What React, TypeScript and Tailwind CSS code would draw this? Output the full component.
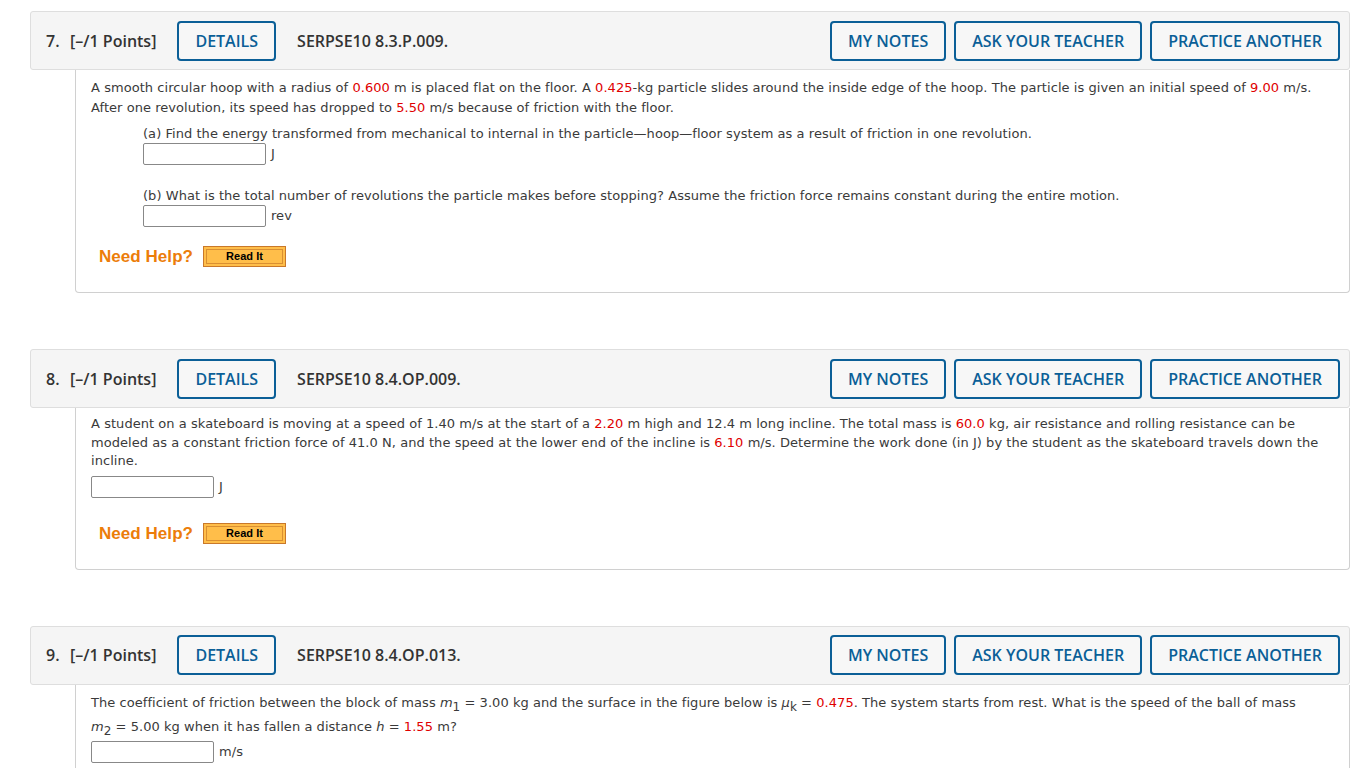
import React from "react";

const R = ({ children }: { children: React.ReactNode }) => (
  <span className="text-[#e00000]">{children}</span>
);

const HeadBtn = ({ label }: { label: string }) => (
  <div className="h-[40px] flex items-center px-[16px] border-2 border-[#0b5f97] rounded-[4px] text-[#0b5f97] text-[16px] font-semibold bg-[#f7f7f7] whitespace-nowrap">
    {label}
  </div>
);

const Header = ({ num, code }: { num: string; code: string }) => (
  <div className="h-[59px] flex items-center border border-[#dedede] bg-[#f5f5f5] rounded-[3px] pl-[15px] pr-[9px] text-[#333] [font-family:'Open_Sans',sans-serif]">
    <span className="text-[16px] font-semibold w-[24px]">{num}</span>
    <span className="text-[16px] font-semibold">[–/1 Points]</span>
    <div className="ml-[21px]">
      <HeadBtn label="DETAILS" />
    </div>
    <span className="ml-[21px] text-[16px] font-semibold">{code}</span>
    <div className="ml-auto flex gap-[8px]">
      <HeadBtn label="MY NOTES" />
      <HeadBtn label="ASK YOUR TEACHER" />
      <HeadBtn label="PRACTICE ANOTHER" />
    </div>
  </div>
);

const Input = () => (
  <div className="w-[123px] h-[22px] border border-[#888] rounded-[2px] bg-white" />
);

const Answer = ({ unit }: { unit: string }) => (
  <div className="flex items-center gap-[5px] leading-[22px]">
    <Input />
    <span>{unit}</span>
  </div>
);

const NeedHelp = () => (
  <div className="flex items-center ml-[8px] h-[21px]">
    <span className="text-[17px] leading-none font-bold text-[#ec7d0a] [font-family:'Liberation_Sans',Arial,sans-serif]">
      Need Help?
    </span>
    <div className="ml-[10px] w-[83px] h-[21px] border border-[#c9782a] bg-[#ffbe4a] p-[2px] flex">
      <div className="flex-1 border border-[#d98f32] flex items-center justify-center text-[11px] font-bold text-black [font-family:'Liberation_Sans',Arial,sans-serif] leading-none">
        Read It
      </div>
    </div>
  </div>
);

const Body = ({ children, className }: { children: React.ReactNode; className?: string }) => (
  <div
    className={
      "ml-[45px] border-x border-b border-[#d0d0d0] rounded-b-[4px] px-[15px] text-[13px] tracking-[0.05px] text-[#3a3a3a] [font-family:'DejaVu_Sans',Verdana,sans-serif] " +
      (className ?? "")
    }
  >
    {children}
  </div>
);

const Sub = ({ children }: { children: React.ReactNode }) => (
  <sub className="text-[12px] top-[4px] not-italic">{children}</sub>
);

export default function App() {
  return (
    <div className="bg-white min-h-[768px] pl-[30px] pr-[16px] pt-[11px]">
      {/* Question 7 */}
      <Header num="7." code="SERPSE10 8.3.P.009." />
      <Body className="pt-[8px] pb-[25px]">
        <p className="leading-[20px]">
          A smooth circular hoop with a radius of <R>0.600</R> m is placed flat on the floor. A <R>0.425</R>-kg particle slides around the inside edge of the hoop. The particle is given an initial speed of <R>9.00</R> m/s.
          <br />
          After one revolution, its speed has dropped to <R>5.50</R> m/s because of friction with the floor.
        </p>
        <div className="ml-[52px] mt-[6px] leading-[19px]">
          <p>(a) Find the energy transformed from mechanical to internal in the particle—hoop—floor system as a result of friction in one revolution.</p>
          <div>
            <Answer unit="J" />
          </div>
          <p className="mt-[21px]">(b) What is the total number of revolutions the particle makes before stopping? Assume the friction force remains constant during the entire motion.</p>
          <div>
            <Answer unit="rev" />
          </div>
        </div>
        <div className="mt-[19px]">
          <NeedHelp />
        </div>
      </Body>

      <div className="h-[56px]" />

      {/* Question 8 */}
      <Header num="8." code="SERPSE10 8.4.OP.009." />
      <Body className="pt-[7px] pb-[25px]">
        <p className="leading-[18.5px]">
          A student on a skateboard is moving at a speed of 1.40 m/s at the start of a <R>2.20</R> m high and 12.4 m long incline. The total mass is <R>60.0</R> kg, air resistance and rolling resistance can be modeled as a constant friction force of 41.0 N, and the speed at the lower end of the incline is <R>6.10</R> m/s. Determine the work done (in J) by the student as the skateboard travels down the incline.
        </p>
        <div className="mt-[5px]">
          <Answer unit="J" />
        </div>
        <div className="mt-[25px]">
          <NeedHelp />
        </div>
      </Body>

      <div className="h-[56px]" />

      {/* Question 9 */}
      <Header num="9." code="SERPSE10 8.4.OP.013." />
      <Body className="pt-[6px] pb-[20px]">
        <p className="leading-[24px]">
          The coefficient of friction between the block of mass <i>m</i>
          <Sub>1</Sub> = 3.00 kg and the surface in the figure below is <i>μ</i>
          <Sub>k</Sub> = <R>0.475</R>. The system starts from rest. What is the speed of the ball of mass
          <br />
          <i>m</i>
          <Sub>2</Sub> = 5.00 kg when it has fallen a distance <i>h</i> = <R>1.55</R> m?
        </p>
        <div className="mt-[2px]">
          <Answer unit="m/s" />
        </div>
      </Body>
    </div>
  );
}
